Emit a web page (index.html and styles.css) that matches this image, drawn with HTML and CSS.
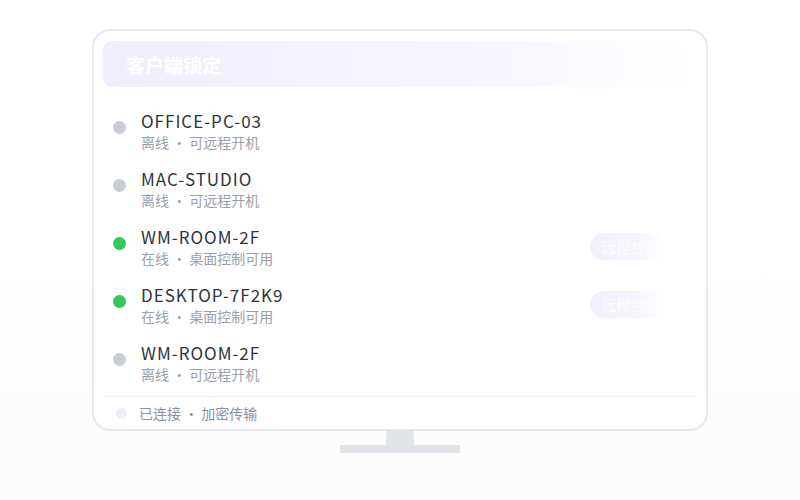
FILE: index.html
```html
<!DOCTYPE html>
<html>
<head>
	<meta charset="utf-8">
	<title>客户端锁定</title>
	<link rel="stylesheet" href="styles.css">
</head>
<body>
<div class="stage">
	<div class="monitor">
		<div class="head">
			<span class="title">客户端锁定</span>
			<span class="count">3 台</span>
		</div>
		<ul class="list">
			<li class="row">
				<span class="dot off"></span>
				<div class="info">
					<div class="name">OFFICE-PC-03</div>
					<div class="sub">离线 · 可远程开机</div>
				</div>
			</li>
			<li class="row">
				<span class="dot off"></span>
				<div class="info">
					<div class="name">MAC-STUDIO</div>
					<div class="sub">离线 · 可远程开机</div>
				</div>
			</li>
			<li class="row">
				<span class="dot on"></span>
				<div class="info">
					<div class="name">WM-ROOM-2F</div>
					<div class="sub">在线 · 桌面控制可用</div>
				</div>
				<a href="javascript:;" class="btn">远程控制</a>
			</li>
			<li class="row">
				<span class="dot on"></span>
				<div class="info">
					<div class="name">DESKTOP-7F2K9</div>
					<div class="sub">在线 · 桌面控制可用</div>
				</div>
				<a href="javascript:;" class="btn">远程控制</a>
			</li>
			<li class="row">
				<span class="dot off"></span>
				<div class="info">
					<div class="name">WM-ROOM-2F</div>
					<div class="sub">离线 · 可远程开机</div>
				</div>
			</li>
		</ul>
		<div class="foot">
			<span class="fdot"></span>
			<span class="ftext">已连接 · 加密传输</span>
		</div>
	</div>
	<div class="neck"></div>
	<div class="base"></div>
</div>
</body>
</html>
```

FILE: styles.css
```css
*{margin: 0; padding: 0; text-decoration: none; box-sizing: border-box;}
html, body{ width: 800px; height: 500px; }
body{
	font-family: "Noto Sans CJK SC", "Noto Sans", sans-serif;
	background: linear-gradient(#fff 0, #fff 50%, #fbfbfc 100%);
	overflow: hidden;
}
.stage{
	display: flex; flex-direction: column; align-items: center;
	padding-top: 29px;
}
.monitor{
	width: 616px; height: 402px;
	border: 2px solid #e6e8eb; border-radius: 18px;
	background: #fff;
	padding: 10px 10px 0 9px;
	display: flex; flex-direction: column;
}
.head{
	height: 46px;
	border-radius: 10px;
	background: linear-gradient(90deg, #f0edfd 0%, #f5f3fe 40%, #faf9ff 75%, rgba(255,255,255,0) 100%);
	display: flex; align-items: center; justify-content: space-between;
	padding: 0 18px 0 23px;
}
.title{ color: #fff; font-size: 19px; font-weight: bold; }
.count{ color: #fff; font-size: 13px; opacity: .8; }
.list{ list-style: none; margin-top: 15px; }
.row{
	height: 58px;
	display: flex; align-items: center;
	padding-left: 10px; padding-right: 30px;
}
.dot{
	width: 13px; height: 13px; border-radius: 50%;
	margin-top: -8px;
	flex: none;
}
.dot.off{ background: #c8ccd3; }
.dot.on{ background: #34c759; }
.info{ margin-left: 15px; flex: 1; }
.name{ font-size: 17px; line-height: 22px; color: #30343b; letter-spacing: 1px; }
.sub{ font-size: 14px; line-height: 20px; color: #9ba0a8; }
.btn{
	width: 76px; height: 27px; line-height: 27px;
	border-radius: 14px;
	margin-top: -1px;
	padding-left: 11px;
	font-family: "Noto Serif CJK SC", "Liberation Serif", serif;
	font-size: 15px; color: #fff;
	background: linear-gradient(90deg, #f1effe 0%, #f6f4ff 60%, rgba(255,255,255,0) 100%);
	white-space: nowrap; overflow: hidden;
}
.foot{
	margin-top: 4px;
	border-top: 1px solid #eef0f3;
	display: flex; align-items: center;
	padding: 4px 0 0 13px;
	height: 29px;
}
.fdot{ width: 11px; height: 11px; border-radius: 50%; background: #eeebfd; }
.ftext{ margin-left: 12px; font-size: 14px; line-height: 20px; color: #8c9099; }
.neck{ width: 28px; height: 15px; background: #e1e4e8; margin-top: -1px; }
.base{ width: 120px; height: 8px; background: #e1e4e8; }
```
